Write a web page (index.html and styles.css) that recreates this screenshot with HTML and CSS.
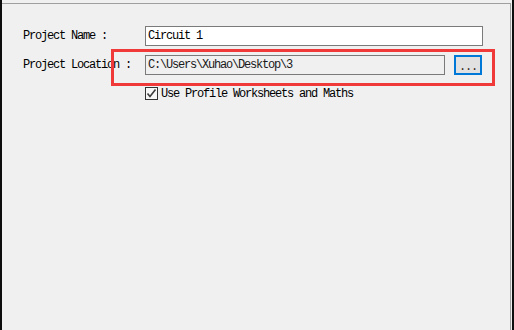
FILE: index.html
```html
<!DOCTYPE html>
<html lang="en">
<head>
  <meta charset="UTF-8" />
  <title>New Project</title>
  <link rel="stylesheet" href="styles.css">
</head>
<body>

<div class="window">
  <div class="frame">
    <div class="row">
      <span class="label">Project Name :</span>
      <div class="field field-name">Circuit 1</div>
    </div>

    <div class="row row-loc">
      <span class="label">Project Location :</span>
      <div class="field field-loc">C:\Users\Xuhao\Desktop\3</div>
      <button class="browse">...</button>
    </div>

    <label class="check-row">
      <span class="box">
        <svg width="11" height="11" viewBox="0 0 11 11">
          <polyline points="1.5,5.5 4,8.5 9.5,1.5" fill="none" stroke="#3c3c3c" stroke-width="1.6" />
        </svg>
      </span>
      <span>Use Profile Worksheets and Maths</span>
    </label>

    <!-- red highlight drawn over the location row -->
    <div class="highlight"></div>
  </div>
</div>

</body>
</html>
```

FILE: styles.css
```css
html, body {
  margin: 0;
  height: 330px;
  overflow: hidden;
}
body {
  background-color: #0d0d0d;
  font-family: "Liberation Mono", "DejaVu Sans Mono", monospace;
  font-size: 12px;
  letter-spacing: -1.2px;
  color: #000;
}
.window {
  margin: 0 2px;
  height: 330px;
  padding-top: 3px;
  box-sizing: border-box;
  background-color: #f0f0f0;
}
.frame {
  position: relative;
  height: 100%;
  margin-right: 1px;
  padding: 22px 0 0 21px;
  box-sizing: border-box;
  border-top: 1px solid #a0a0a0;
  border-right: 1px solid #a0a0a0;
}
.row {
  display: flex;
  align-items: center;
  height: 20px;
}
.label {
  width: 122px;
  flex: none;
  white-space: nowrap;
}
.field {
  height: 20px;
  box-sizing: border-box;
  border: 1px solid #7a7a7a;
  padding: 0 2px;
  line-height: 18px;
  white-space: nowrap;
}
.field-name {
  width: 338px;
  background-color: #fff;
}
.row-loc {
  margin-top: 9px;
}
.field-loc {
  width: 300px;
  background-color: #f0f0f0;
  color: #1a1a1a;
}
.browse {
  width: 28px;
  height: 20px;
  margin-left: 9px;
  padding: 0;
  border: 2px solid #0078d7;
  background-color: #e1e1e1;
  font-family: inherit;
  font-size: 12px;
  letter-spacing: -1.2px;
  line-height: 20px;
  color: #3a2a1a;
}
.check-row {
  display: flex;
  align-items: center;
  gap: 3px;
  margin-top: 12px;
  padding-left: 122px;
  height: 13px;
}
.box {
  width: 13px;
  height: 13px;
  box-sizing: border-box;
  border: 1px solid #333;
  background-color: #f7f7f7;
  display: flex;
  align-items: center;
  justify-content: center;
}
.highlight {
  position: absolute;
  left: 109px;
  top: 45px;
  width: 384px;
  height: 37px;
  box-sizing: border-box;
  border: 3px solid #f03a3a;
}
```
